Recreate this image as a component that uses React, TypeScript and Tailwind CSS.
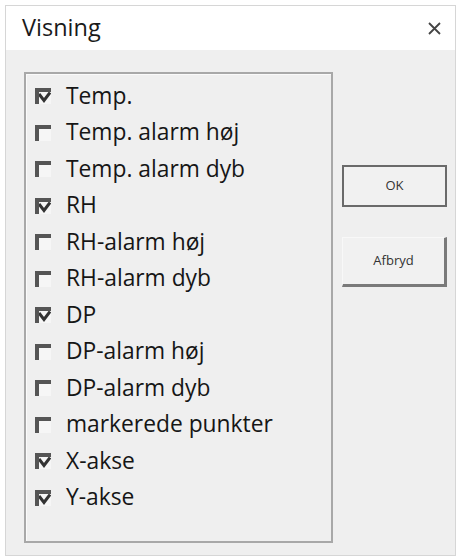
import React from "react";

const items: { label: string; checked: boolean }[] = [
  { label: "Temp.", checked: true },
  { label: "Temp. alarm høj", checked: false },
  { label: "Temp. alarm dyb", checked: false },
  { label: "RH", checked: true },
  { label: "RH-alarm høj", checked: false },
  { label: "RH-alarm dyb", checked: false },
  { label: "DP", checked: true },
  { label: "DP-alarm høj", checked: false },
  { label: "DP-alarm dyb", checked: false },
  { label: "markerede punkter", checked: false },
  { label: "X-akse", checked: true },
  { label: "Y-akse", checked: true },
];

function Check({ checked }: { checked: boolean }) {
  return (
    <span className="relative w-[16px] h-[16px] shrink-0 border-t-[4px] border-l-[4px] border-[#555] bg-[#f6f6f6]">
      {checked && (
        <svg className="absolute left-[0px] top-[0px]" width="12" height="12" viewBox="0 0 12 12">
          <path d="M0 2 L5 8.5 L11 0.5" fill="none" stroke="#333" strokeWidth="3" />
        </svg>
      )}
    </span>
  );
}

export default function App() {
  return (
    <div className="w-[457px] h-[559px] bg-white pt-[5px] pl-[5px] font-['Open_Sans',sans-serif]">
      <div className="w-[451px] h-[551px] border border-[#d6d6d6] flex flex-col">
        <div className="h-[44px] bg-white flex items-center justify-between pl-[16px] pr-[14px]">
          <span className="text-[23.5px] text-[#1a1a1a] leading-none">Visning</span>
          <svg width="13" height="13" viewBox="0 0 13 13">
            <path d="M1 1 L12 12 M12 1 L1 12" stroke="#444" strokeWidth="1.8" />
          </svg>
        </div>
        <div className="flex-1 bg-[#efefef] flex items-start">
          <div className="ml-[18px] mt-[22px] w-[309px] h-[471px] border-2 border-[#a8a8a8] shadow-[inset_1px_1px_0_#fafafa] pt-[4px] pl-[9px]">
            {items.map((it) => (
              <div key={it.label} className="h-[36.5px] flex items-center gap-[15px]">
                <Check checked={it.checked} />
                <span className="text-[22.8px] text-[#161616] leading-none">{it.label}</span>
              </div>
            ))}
          </div>
          <div className="ml-[9px] mt-[115px] flex flex-col gap-[30px]">
            <button className="w-[105px] h-[42px] border-2 border-[#6a6a6a] bg-[#f1f1f1] text-[13px] text-[#333]">
              OK
            </button>
            <button className="w-[105px] h-[50px] border-r-[3px] border-b-[3px] border-t border-l border-r-[#7a7a7a] border-b-[#7a7a7a] border-t-[#f8f8f8] border-l-[#f8f8f8] bg-[#f1f1f1] text-[13px] text-[#333]">
              Afbryd
            </button>
          </div>
        </div>
      </div>
    </div>
  );
}
